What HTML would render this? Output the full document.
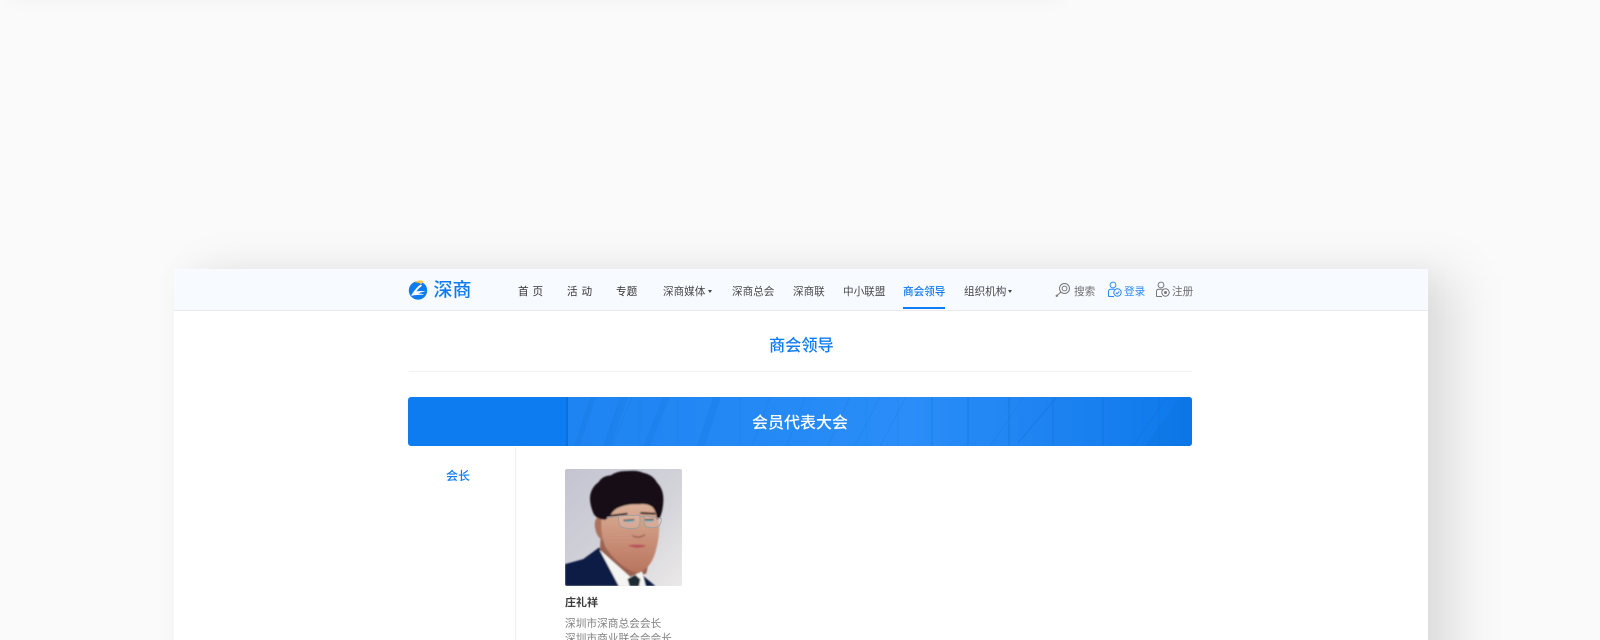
<!DOCTYPE html>
<html lang="zh-CN"><head><meta charset="utf-8"><title>商会领导</title>
<style>
html,body{margin:0;padding:0;width:1600px;height:640px;overflow:hidden;background:#fafafa}
body{font-family:"Liberation Sans","Noto Sans CJK SC",sans-serif}
.root{position:relative;width:1600px;height:640px;overflow:hidden;background:#fafafa}
.card{position:absolute;left:174px;top:269px;width:1254px;height:371px;background:#fff}
.nav{position:absolute;left:174px;top:269px;width:1254px;height:41px;background:#f7faff;border-bottom:1px solid #e8eaec}
.t{position:absolute;white-space:nowrap;line-height:14px;height:14px;font-size:10.6px;color:#484848}
.b{color:#1a7ff0}
.u{position:absolute;left:903px;top:307px;width:42px;height:2px;background:#0f7bf2}
svg{position:absolute;overflow:hidden}
</style></head><body>
<div class="root">
<svg style="left:0;top:0" width="1600" height="640" viewBox="0 0 1600 640">
<defs>
<filter id="sh1" filterUnits="userSpaceOnUse" x="0" y="0" width="1600" height="1000"><feGaussianBlur stdDeviation="23"/></filter>
<filter id="sh2" filterUnits="userSpaceOnUse" x="0" y="0" width="1600" height="1000"><feGaussianBlur stdDeviation="11"/></filter>
<filter id="sh3" filterUnits="userSpaceOnUse" x="-100" y="-100" width="1400" height="200"><feGaussianBlur stdDeviation="8"/></filter>
</defs>
<rect x="204" y="275" width="1254" height="420" fill="#000" fill-opacity=".105" filter="url(#sh1)"/>
<rect x="178" y="265" width="1254" height="420" fill="#000" fill-opacity=".02" filter="url(#sh2)"/>
<rect x="10" y="-30" width="1050" height="30" fill="#000" fill-opacity=".03" filter="url(#sh3)"/>
</svg>
<div class="card"></div>
<div class="nav"></div>

<svg style="left:408px;top:279px" width="21" height="22" viewBox="0 0 21 22">
<circle cx="10" cy="11.5" r="9.2" fill="#0f7bf0"/>
<path d="M7 3.4Q11 0 15.6 2.2L13.6 5Q10.5 3.4 7 3.4Z" fill="#f6c944"/>
<path d="M3 16.8Q7.5 9 12.8 5.4L14 6.8Q10.2 9.6 8.4 12.4Q13 11.4 17.6 12.6Q13 12.8 9.8 14.6Q13.5 14.2 16.4 15.8Q9.5 15.4 3 16.8Z" fill="#fff"/>
</svg>
<div class="t" style="left:433.5px;top:281px;height:20px;line-height:20px;font-size:19px;color:#0f7bf0;font-weight:500">深商</div>

<div class="t" style="left:518px;top:285px;word-spacing:1px;color:#333">首 页</div>
<div class="t" style="left:567px;top:285px;word-spacing:1px;color:#333">活 动</div>
<div class="t" style="left:616px;top:285px;color:#333">专题</div>
<div class="t" style="left:663px;top:285px">深商媒体</div>
<div style="position:absolute;left:708px;top:290px;border:2px solid transparent;border-top:3px solid #444"></div>
<div class="t" style="left:732px;top:285px">深商总会</div>
<div class="t" style="left:793px;top:285px">深商联</div>
<div class="t" style="left:843px;top:285px">中小联盟</div>
<div class="t b" style="left:903px;top:285px;color:#0f7bf2;font-weight:500">商会领导</div>
<div class="u"></div>
<div class="t" style="left:964px;top:285px">组织机构</div>
<div style="position:absolute;left:1008px;top:290px;border:2px solid transparent;border-top:3px solid #444"></div>

<svg style="left:1055px;top:282px" width="16" height="16" viewBox="0 0 16 16" fill="none" stroke="#777" stroke-width="1">
<circle cx="9.5" cy="6.5" r="5"/><circle cx="9.5" cy="6.5" r="2.4"/><path d="M5.8 10L1.8 13.8"/><circle cx="1.8" cy="13.8" r=".7"/></svg>
<div class="t" style="left:1074px;top:285px;color:#6e6e6e">搜索</div>
<svg style="left:1107px;top:281px" width="15" height="17" viewBox="0 0 15 17" fill="none" stroke="#2a8af5" stroke-width="1">
<circle cx="6" cy="4" r="2.9"/><path d="M1.5 15.5V10.5Q1.5 8.3 4 8.3H7.5M1.5 15.5H7"/><circle cx="10.5" cy="11.5" r="3.7"/><path d="M8.8 11.5L10.2 12.9L12.3 10.4"/></svg>
<div class="t b" style="left:1124px;top:285px;color:#2a8af5">登录</div>
<svg style="left:1155px;top:281px" width="15" height="17" viewBox="0 0 15 17" fill="none" stroke="#777" stroke-width="1">
<circle cx="6" cy="4" r="2.9"/><path d="M1.5 15.5V10.5Q1.5 8.3 4 8.3H7.5M1.5 15.5H7"/><circle cx="10.5" cy="11.5" r="3.7"/><circle cx="10.5" cy="11.5" r="1" fill="#777"/></svg>
<div class="t" style="left:1172px;top:285px;color:#6e6e6e">注册</div>

<div class="t" style="left:769px;top:336px;height:20px;line-height:20px;font-size:16.2px;color:#0f7bf2;font-weight:500">商会领导</div>
<div style="position:absolute;left:409px;top:371px;width:783px;height:1px;background:#f2f2f2"></div>

<svg style="left:408px;top:397px;border-radius:3px" width="784" height="49" viewBox="408 397 784 49">
<defs><linearGradient id="g" x1="0" x2="1" y1="0" y2="0">
<stop offset="0" stop-color="#1e84f1"/><stop offset=".55" stop-color="#2a8df8"/><stop offset=".75" stop-color="#1f84f1"/><stop offset="1" stop-color="#0d79ec"/></linearGradient></defs>
<rect x="408" y="397" width="784" height="49" fill="#0d7cf0"/>
<rect x="566" y="397" width="626" height="49" fill="url(#g)"/>
<rect x="566" y="397" width="2" height="49" fill="#0b6fdc"/>
<g fill="#1071dd" fill-opacity=".2">
<path d="M590 397L596 397L580 446L574 446Z M620 397L628 397L611 446L603 446Z M663 397L670 397L650 446L643 446Z M713 397L721 397L705 446L697 446Z"/>
</g>
<g stroke="#1071dd" stroke-opacity=".22" fill="none">
<path d="M632 397L612 446M770 397L752 446M805 397L787 446M850 397L828 446M880 397L855 446M906 397L880 446M1024 397L990 446"/>
<path d="M1057 397L1018 443M1167 397L1133 446" stroke-opacity=".5"/>
<path d="M640 397V446M678 397V446M740 397V446M866 397V446M898 397V446" stroke-opacity=".15"/>
<path d="M932 397V446M968 397V446M1009 397V446M1053 397V446M1103 397V446M1159 397V446" stroke-opacity=".6"/>
</g>
<path d="M1192 397V446H1145L1180 397Z" fill="#0b6fdc" fill-opacity=".3"/>
</svg>
<div class="t" style="left:752px;top:414px;height:20px;line-height:20px;font-size:16px;color:#fff;font-weight:500">会员代表大会</div>

<div style="position:absolute;left:515px;top:447px;width:1px;height:193px;background:#f0f0f0"></div>
<div class="t" style="left:446px;top:469px;font-size:12px;color:#0f7bf2;font-weight:500">会长</div>

<svg style="left:565px;top:469px;border-radius:2px" width="117" height="117" viewBox="76 57 348 348">
<defs>
<linearGradient id="bg" x1="0" y1="0" x2="1" y2="1"><stop offset="0" stop-color="#c4c4d2"/><stop offset=".6" stop-color="#d4d4da"/><stop offset="1" stop-color="#ebe9e8"/></linearGradient>
<filter id="s" x="-10%" y="-10%" width="120%" height="120%"><feGaussianBlur stdDeviation="2.4"/></filter>
<linearGradient id="f" x1="0" y1="0" x2="0" y2="1"><stop offset="0" stop-color="#dcb39c"/><stop offset=".45" stop-color="#cc957d"/><stop offset="1" stop-color="#b8745e"/></linearGradient>
</defs>
<rect x="76" y="57" width="348" height="348" fill="url(#bg)"/>
<g filter="url(#s)">
<path d="M182 262L180 298L270 382L318 368L332 300Z" fill="#9a6250"/>
<path d="M76 340L130 325L178 290L238 405H76Z" fill="#0e1a44"/>
<path d="M305 372L345 405H298Z" fill="#0e1a44"/>
<path d="M178 296L270 378L305 362L316 405H236Z" fill="#f4f4f2"/>
<path d="M262 384L285 372L300 385L296 405H268Z" fill="#1c2a32"/>
<path d="M178 198Q160 205 166 235Q172 264 192 270L204 200Z" fill="#ab735b"/>
<path d="M188 165Q176 250 198 292Q240 352 290 366Q334 356 348 292Q366 220 346 150Z" fill="url(#f)"/>
<path d="M161 190Q146 155 152 130Q158 108 176 96Q186 78 212 76Q232 62 262 63Q290 60 308 68Q338 74 350 98Q372 120 368 160Q366 185 358 202L349 208Q349 184 336 170Q320 158 296 162Q262 160 240 170Q222 176 214 190L197 208Q172 208 161 190Z" fill="#121118"/>
<path d="M205 197L262 190M300 188L345 190" stroke="#2a1c1c" stroke-width="6" fill="none"/>
<path d="M250 210L282 208M312 208L340 208" stroke="#3a3a3a" stroke-width="5" fill="none"/>
<path d="M256 214L280 212M318 213L336 212" stroke="#5fb0c4" stroke-width="4" fill="none"/>
<path d="M262 285Q290 278 318 285Q295 298 262 285Z" fill="#b8545a"/>
<path d="M276 255Q295 266 314 252" stroke="#96604f" stroke-width="4" fill="none"/>
</g>
<g fill="#fff" fill-opacity=".14" stroke="#9a9ea4" stroke-width="2.5">
<path d="M235 197L298 194Q302 222 292 232Q255 238 240 226Q235 215 235 197Z"/>
<path d="M312 196L362 204Q364 222 350 230Q320 235 312 222Z"/>
<path d="M200 200L235 198M298 198L312 198" fill="none"/>
</g>
</svg>

<div class="t" style="left:565px;top:596px;font-size:11px;color:#3c3c3c;font-weight:700">庄礼祥</div>
<div class="t" style="left:565px;top:617px;color:#808080;font-size:10.7px">深圳市深商总会会长</div>
<div class="t" style="left:565px;top:632px;height:8px;overflow:hidden;color:#808080;font-size:10.7px">深圳市商业联合会会长</div>
</div>
</body></html>
